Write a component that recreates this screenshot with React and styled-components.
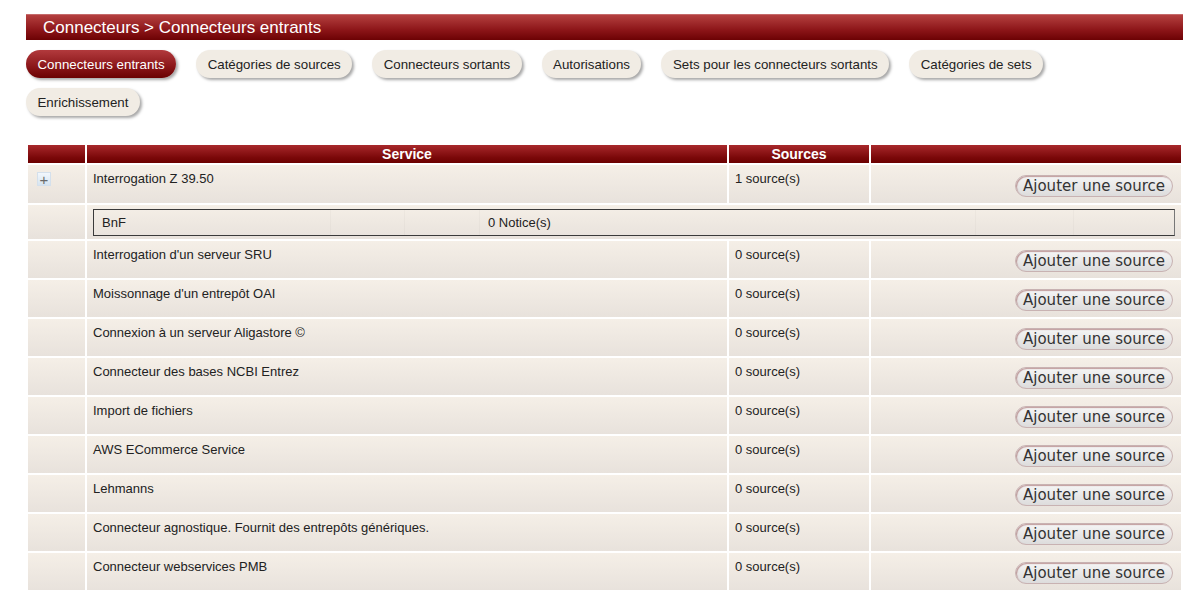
import React from 'react'
import styled, { createGlobalStyle } from 'styled-components'

const GlobalStyle = createGlobalStyle`
  * {
    box-sizing: border-box;
  }
  html, body {
    margin: 0;
    overflow: hidden;
    background: #fff;
    font-family: "Liberation Sans", Arial, sans-serif;
    font-size: 13px;
    color: #222;
  }
`

const Page = styled.div`
  padding: 14px 17px 0 26px;
`

const TitleBar = styled.h1`
  margin: 0;
  height: 26px;
  display: flex;
  align-items: center;
  padding-left: 17px;
  font-size: 17px;
  font-weight: normal;
  color: #fff;
  background: linear-gradient(#b4403f, #8c1518 60%, #6c0204);
  border-top: 1px solid #c46a6a;
`

const TabBar = styled.nav`
  display: flex;
  flex-wrap: wrap;
  gap: 10px 20px;
  max-width: 1100px;
  margin-top: 10px;
`

const Tab = styled.button`
  height: 28px;
  padding: 0 11.5px;
  border: none;
  border-radius: 14px;
  font-family: "Liberation Sans", Arial, sans-serif;
  font-size: 13.3px;
  cursor: pointer;
  color: ${({ $active }) => ($active ? '#fff' : '#222')};
  background: ${({ $active }) =>
    $active ? 'linear-gradient(#b23a3d, #8a1619 60%, #6a0102)' : '#f1ece4'};
  box-shadow: 2px 2px 3px rgba(0, 0, 0, 0.35);
`

const Table = styled.table`
  margin-top: 27px;
  width: 1157px;
  table-layout: fixed;
  border-spacing: 2px;
`

const HeadCell = styled.th`
  height: 18px;
  padding: 0;
  font-size: 14px;
  font-weight: bold;
  color: #fff;
  text-align: center;
  background: linear-gradient(#a8282b, #7a0809 70%, #6c0000);
`

const Cell = styled.td`
  height: ${({ $h }) => $h || 37}px;
  padding: ${({ $pad }) => $pad || '6px 6px 4px'};
  vertical-align: ${({ $middle }) => ($middle ? 'middle' : 'top')};
  text-align: ${({ $right }) => ($right ? 'right' : 'left')};
  background: linear-gradient(#f5efe7, #e8e2dc);
  line-height: 15px;
`

const Expander = styled.span`
  display: inline-flex;
  align-items: center;
  justify-content: center;
  width: 14px;
  height: 14px;
  margin: 1px 0 0 0;
  border: 1px solid #d4e0ec;
  background: linear-gradient(#f2f7fc, #d6e4f1);
  color: #6a6a6a;
  font-size: 15px;
  line-height: 1;
`

const AddButton = styled.button`
  height: 22px;
  padding: 0 7px;
  border: 1px solid #c8b2b2;
  border-radius: 11px;
  font-family: "DejaVu Sans", sans-serif;
  font-size: 15px;
  color: #333;
  background: linear-gradient(#f5f5f5, #dddcdc);
  box-shadow: inset 1px 1px 1px rgba(130, 50, 50, 0.45);
  cursor: pointer;
`

const SourceList = styled.div`
  display: grid;
  grid-template-columns: 236px 74px 75px 496px 98px 1fr;
  height: 27px;
  border: 1px solid #3a3a3a;
  border-right-color: #777;
`

const SourceCell = styled.div`
  display: flex;
  align-items: center;
  padding-left: 8px;
  border-left: ${({ $first }) => ($first ? 'none' : '1px solid rgba(0, 0, 0, 0.025)')};
`

const services = [
  {
    name: 'Interrogation Z 39.50',
    count: 1,
    expandable: true,
    sources: [{ name: 'BnF', notices: 0 }],
  },
  { name: "Interrogation d'un serveur SRU", count: 0 },
  { name: "Moissonnage d'un entrepôt OAI", count: 0 },
  { name: 'Connexion à un serveur Aligastore ©', count: 0 },
  { name: 'Connecteur des bases NCBI Entrez', count: 0 },
  { name: 'Import de fichiers', count: 0 },
  { name: 'AWS ECommerce Service', count: 0 },
  { name: 'Lehmanns', count: 0 },
  { name: 'Connecteur agnostique. Fournit des entrepôts génériques.', count: 0 },
  { name: 'Connecteur webservices PMB', count: 0 },
]

const tabs = [
  'Connecteurs entrants',
  'Catégories de sources',
  'Connecteurs sortants',
  'Autorisations',
  'Sets pour les connecteurs sortants',
  'Catégories de sets',
  'Enrichissement',
]

function ServiceRows({ service, first }) {
  return (
    <>
      <tr>
        <Cell $h={first ? 38 : 37} $pad="6px 9px 4px">
          {service.expandable && <Expander>+</Expander>}
        </Cell>
        <Cell>{service.name}</Cell>
        <Cell>{service.count} source(s)</Cell>
        <Cell $middle $right $pad="5px 8px 2px">
          <AddButton>Ajouter une source</AddButton>
        </Cell>
      </tr>
      {service.sources &&
        service.sources.map((src) => (
          <tr key={src.name}>
            <Cell $h={34} />
            <Cell colSpan={3} $h={34} $pad="4px 6px 3px">
              <SourceList>
                <SourceCell $first>{src.name}</SourceCell>
                <SourceCell />
                <SourceCell />
                <SourceCell>{src.notices} Notice(s)</SourceCell>
                <SourceCell />
                <SourceCell />
              </SourceList>
            </Cell>
          </tr>
        ))}
    </>
  )
}

export default function App() {
  return (
    <Page>
      <GlobalStyle />
      <TitleBar>Connecteurs &gt; Connecteurs entrants</TitleBar>
      <TabBar>
        {tabs.map((t, i) => (
          <Tab key={t} $active={i === 0}>
            {t}
          </Tab>
        ))}
      </TabBar>
      <Table>
        <colgroup>
          <col style={{ width: 57 }} />
          <col style={{ width: 640 }} />
          <col style={{ width: 140 }} />
          <col />
        </colgroup>
        <thead>
          <tr>
            <HeadCell />
            <HeadCell>Service</HeadCell>
            <HeadCell>Sources</HeadCell>
            <HeadCell />
          </tr>
        </thead>
        <tbody>
          {services.map((s, i) => (
            <ServiceRows key={s.name} service={s} first={i === 0} />
          ))}
        </tbody>
      </Table>
    </Page>
  )
}
